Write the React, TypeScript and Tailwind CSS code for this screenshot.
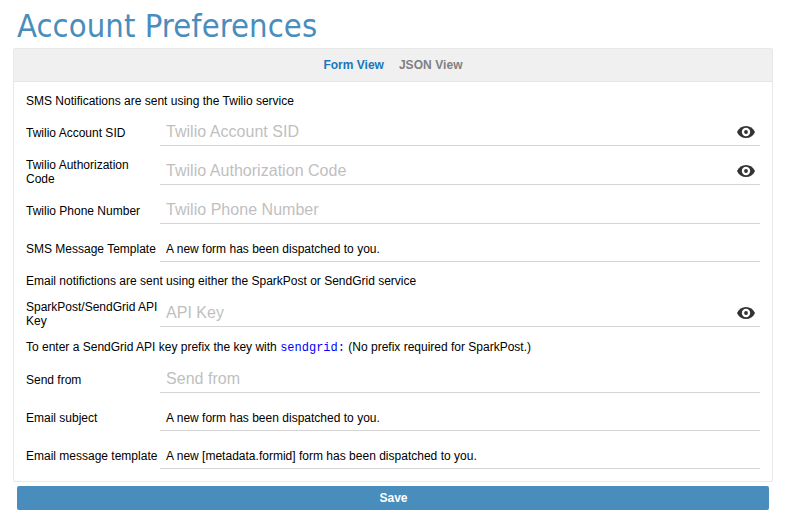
import { useState } from 'react';

type FieldProps = {
  label: string;
  placeholder?: string;
  value?: string;
  secret?: boolean;
  className?: string;
};

function EyeIcon() {
  return (
    <svg width="18" height="12" viewBox="0 0 18 12" className="block">
      <path d="M0 6C1.800 2 5 0 9 0s7.200 2 9 6c-1.800 4-5 6-9 6S1.800 10 0 6z" fill="#333" />
      <circle cx="9" cy="6" r="4.200" fill="#fff" />
      <circle cx="9" cy="6" r="1.900" fill="#333" />
    </svg>
  );
}

function Field({ label, placeholder, value = '', secret, className = '' }: FieldProps) {
  const [text, setText] = useState(value);
  return (
    <div className={`flex h-[26px] items-center ${className}`}>
      <label className="w-[134px] shrink-0 leading-[14px]">{label}</label>
      <div className="flex h-[26px] flex-1 items-center border-b border-[#d4d4d4] pr-[5px] pl-1.5">
        <input
          className={`h-[25px] min-w-0 flex-1 bg-transparent outline-none placeholder:text-[#bfbfbf] ${
            placeholder ? 'pb-px text-[16px] tracking-[0.03px]' : 'text-[12px] tracking-[0.01px]'
          }`}
          placeholder={placeholder}
          value={text}
          onChange={(e) => setText(e.target.value)}
        />
        {secret && (
          <button aria-label="Show value" className="mb-px">
            <EyeIcon />
          </button>
        )}
      </div>
    </div>
  );
}

export default function App() {
  return (
    <div className="h-[523px] w-[786px] overflow-hidden bg-white px-[13px] font-['Liberation_Sans',Arial,sans-serif] text-[12px] text-black">
      <h1 className="h-12 pt-1 pl-1 font-['DejaVu_Sans_Condensed','DejaVu_Sans',sans-serif] text-[32.5px] leading-[44px] tracking-[0.06px] whitespace-nowrap text-[#498dbd]">
        Account Preferences
      </h1>
      <div className="h-[434px] w-[760px] rounded-[2px] border border-[#e8e8e8]">
        <div className="flex h-[33px] justify-center gap-[15px] border-b border-[#e5e5e5] bg-[#f0f0f0] font-bold leading-[32px]">
          <button className="text-[#1a76bb]">Form View</button>
          <button className="tracking-[0.06px] text-[#808080]">JSON View</button>
        </div>
        <div className="px-3 pt-3">
          <p className="leading-[14px]">SMS Notifications are sent using the Twilio service</p>
          <Field className="mt-3" label="Twilio Account SID" placeholder="Twilio Account SID" secret />
          <Field className="mt-[13px]" label="Twilio Authorization Code" placeholder="Twilio Authorization Code" secret />
          <Field className="mt-[13px]" label="Twilio Phone Number" placeholder="Twilio Phone Number" />
          <Field className="mt-3" label="SMS Message Template" value="A new form has been dispatched to you." />
          <p className="mt-3 leading-[14px]">
            Email notifictions are sent using either the SparkPost or SendGrid service
          </p>
          <Field className="mt-[13px]" label="SparkPost/SendGrid API Key" placeholder="API Key" secret />
          <p className="mt-[13px] h-[14px] leading-[14px]">
            To enter a SendGrid API key prefix the key with{' '}
            <code className="font-['Liberation_Mono',monospace] text-[12px] leading-none text-[#0000ff]">sendgrid:</code> (No
            prefix required for SparkPost.)
          </p>
          <Field className="mt-[13px]" label="Send from" placeholder="Send from" />
          <Field className="mt-3" label="Email subject" value="A new form has been dispatched to you." />
          <Field
            className="mt-3"
            label="Email message template"
            value="A new [metadata.formid] form has been dispatched to you."
          />
        </div>
      </div>
      <button className="mt-1 ml-1 block h-6 w-[752px] rounded-[2px] bg-[#498dbd] pl-px text-center font-bold leading-[24px] text-white">
        Save
      </button>
    </div>
  );
}
